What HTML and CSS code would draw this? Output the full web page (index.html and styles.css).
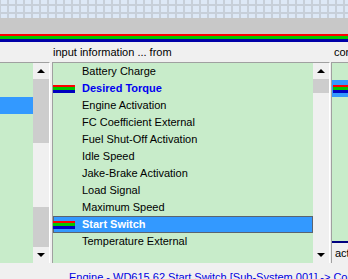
FILE: index.html
```html
<!DOCTYPE html>
<html>
<head>
<meta charset="utf-8">
<link rel="stylesheet" href="styles.css">
</head>
<body>
<div class="grid"></div>
<div class="band"></div>
<div class="stripes"><div class="s-red"></div><div class="s-green"></div><div class="s-blue"></div></div>
<div class="headers">
  <div class="h-left"></div>
  <div class="h-mid">input information ... from</div>
  <div class="h-right">con</div>
</div>
<div class="panes">
  <div class="pane pane-left">
    <div class="list">
      <div class="row"></div>
      <div class="row"></div>
      <div class="row sel-plain"></div>
    </div>
    <div class="sbar">
      <div class="sbtn"><span class="tri-up"></span></div>
      <div class="seg thumb" style="height:64px"></div>
      <div class="seg track" style="height:64px"></div>
      <div class="seg thumb" style="height:40px"></div>
      <div class="sbtn"><span class="tri-down"></span></div>
    </div>
  </div>
  <div class="pane pane-mid">
    <div class="list">
      <div class="row"><span class="txt">Battery Charge</span></div>
      <div class="row"><span class="ico"></span><span class="txt bold blue">Desired Torque</span></div>
      <div class="row"><span class="txt">Engine Activation</span></div>
      <div class="row"><span class="txt">FC Coefficient External</span></div>
      <div class="row"><span class="txt">Fuel Shut-Off Activation</span></div>
      <div class="row"><span class="txt">Idle Speed</span></div>
      <div class="row"><span class="txt">Jake-Brake Activation</span></div>
      <div class="row"><span class="txt">Load Signal</span></div>
      <div class="row"><span class="txt">Maximum Speed</span></div>
      <div class="row sel"><span class="ico"></span><span class="txt bold white">Start Switch</span></div>
      <div class="row"><span class="txt">Temperature External</span></div>
    </div>
    <div class="sbar">
      <div class="sbtn"><span class="tri-up"></span></div>
      <div class="seg thumb" style="height:14px"></div>
      <div class="seg track" style="height:154px"></div>
      <div class="sbtn"><span class="tri-down"></span></div>
    </div>
  </div>
  <div class="pane pane-right">
    <div class="rlist">
      <div class="row"></div>
      <div class="row sel-plain"><span class="ico"></span></div>
    </div>
    <div class="rfield">act</div>
  </div>
</div>
<div class="status">Engine - WD615.62 Start Switch [Sub-System 001] -&gt; Components</div>
</body>
</html>
```

FILE: styles.css
```css
html, body {
  margin: 0;
  padding: 0;
}
body {
  width: 348px;
  height: 279px;
  overflow: hidden;
  background: #f0f0f0;
  font-family: "Liberation Sans", Arial, sans-serif;
  font-size: 11px;
  color: #000;
}
.grid {
  height: 18px;
  background-color: #dde8f6;
  background-image:
    linear-gradient(to right, #c7cfd9 2px, transparent 2px),
    linear-gradient(to bottom, #c7cfd9 2px, transparent 2px);
  background-size: 8px 8px, 8px 8px;
  background-position: 7px 0, 0 4px;
}
.band {
  height: 16px;
  background: #c8c8c8;
}
.stripes { display: flex; flex-direction: column; }
.s-red { height: 2px; background: #ff0000; }
.s-green { height: 3px; background: #00c800; }
.s-blue { height: 3px; background: #0000a8; }

.headers {
  height: 20px;
  display: flex;
  line-height: 20px;
  white-space: nowrap;
}
.h-left { width: 52px; }
.h-mid { width: 280px; padding-left: 1px; }
.h-right { flex: 1; overflow: hidden; padding-left: 1px; }

.panes {
  height: 201px;
  display: flex;
}
.pane {
  display: flex;
  border-top: 1px solid #a0a0a0;
  height: 200px;
  overflow: hidden;
}
.pane-left {
  width: 49px;
  border-right: 1px solid #ffffff;
  margin-right: 2px;
}
.pane-mid {
  width: 276px;
  border-left: 1px solid #a0a0a0;
  border-right: 1px solid #ffffff;
  margin-right: 1px;
}
.pane-right {
  flex: 1;
  border-left: 1px solid #a0a0a0;
  flex-direction: column;
}
.list {
  flex: 1;
  background: #c8ecca;
  overflow: hidden;
}
.row {
  height: 17px;
  display: flex;
  align-items: center;
  white-space: nowrap;
  box-sizing: border-box;
}
.txt { padding-left: 29px; line-height: 17px; }
.ico + .txt { padding-left: 7px; }
.ico {
  width: 22px;
  height: 8px;
  flex: none;
  background: linear-gradient(to bottom, #ff0000 0 2px, #00c800 2px 5px, #0000c0 5px 8px);
}
.bold { font-weight: bold; }
.blue { color: #0000f0; }
.white { color: #ffffff; }
.sel {
  background: #3399ff;
  box-shadow: inset 0 0 0 1px #5a6470;
}
.sel-plain { background: #3399ff; }

.sbar {
  width: 16px;
  flex: none;
  display: flex;
  flex-direction: column;
}
.sbtn {
  height: 16px;
  background: #f0f0f0;
  display: flex;
  align-items: center;
  justify-content: center;
}
.seg { flex: none; }
.thumb { background: #cdcdcd; }
.track { background: #f0f0f0; }
.tri-up {
  width: 0; height: 0;
  border-left: 4px solid transparent;
  border-right: 4px solid transparent;
  border-bottom: 4px solid #000;
}
.tri-down {
  width: 0; height: 0;
  border-left: 4px solid transparent;
  border-right: 4px solid transparent;
  border-top: 4px solid #000;
}

.rlist {
  height: 178px;
  background: #c8ecca;
  border-bottom: 2px solid #000080;
  overflow: hidden;
}
.rlist .ico { margin-left: 1px; }
.rfield {
  flex: 1;
  padding-left: 3px;
  line-height: 20px;
  white-space: nowrap;
}

.status {
  height: 16px;
  padding-top: 8px;
  padding-left: 69px;
  line-height: 13px;
  color: #0000e0;
  white-space: nowrap;
  overflow: hidden;
}
```
